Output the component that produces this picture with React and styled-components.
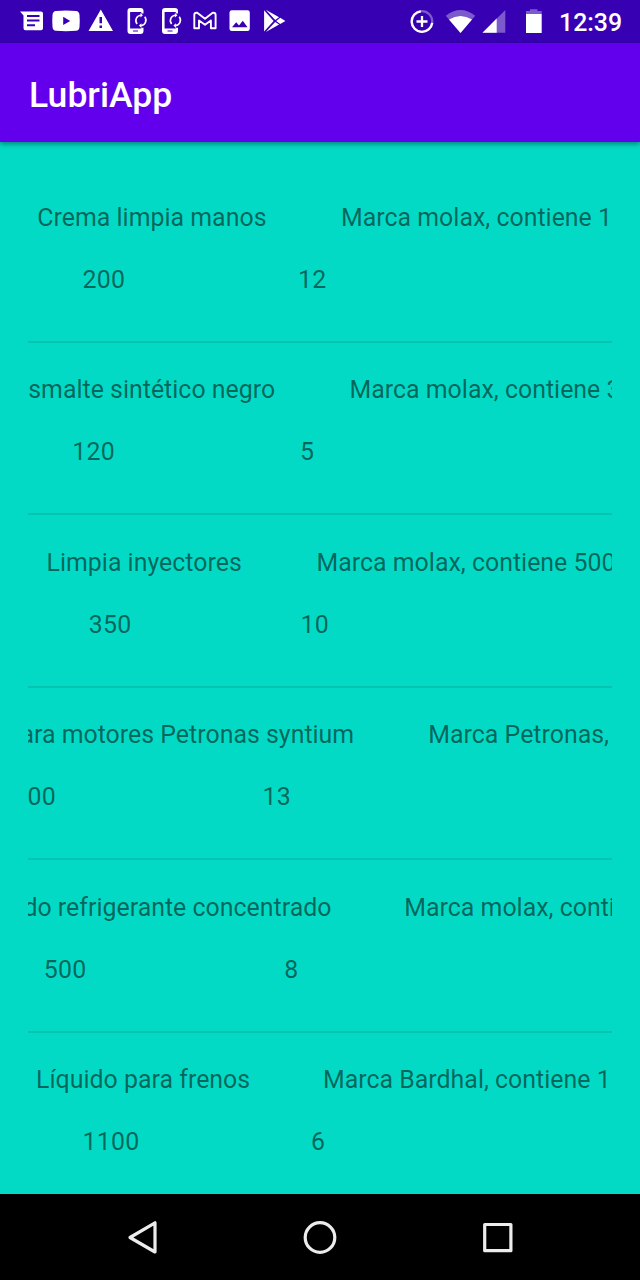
import React from "react";
import styled, { createGlobalStyle } from "styled-components";

const GlobalStyle = createGlobalStyle`
  * { box-sizing: border-box; }
  body { margin: 0; background: #03dac5; }
`;

const Screen = styled.div`
  width: 640px;
  height: 1280px;
  display: flex;
  flex-direction: column;
  overflow: hidden;
  background: #03dac5;
  font-family: Roboto, "Noto Sans", sans-serif;
`;

const StatusBar = styled.header`
  flex: 0 0 43px;
  height: 43px;
  display: flex;
  justify-content: space-between;
  background: #3700b3;
  color: #fff;
`;

const StatusIcons = styled.svg`
  display: block;
  width: ${(p) => p.$width}px;
  height: 43px;
`;

const StatusRight = styled.div`
  display: flex;
  align-items: center;
  padding-right: 18px;
`;

const Clock = styled.span`
  width: 63px;
  font-size: 24.89px;
  font-weight: 500;
  line-height: 40px;
  padding-top: 3px;
  white-space: nowrap;
`;

const AppBar = styled.div`
  flex: 0 0 99px;
  display: flex;
  align-items: center;
  padding: 5px 29px 0;
  background: #6200ee;
  box-shadow: 0 2px 5px rgba(0, 0, 0, 0.4);
  z-index: 1;
`;

const Title = styled.h1`
  margin: 0;
  color: #fff;
  font-size: 35.56px;
  font-weight: 500;
  line-height: 42px;
`;

const List = styled.main`
  flex: 1;
  min-height: 0;
  padding: 28px 28px 0;
  overflow: hidden;
`;

const Item = styled.section`
  height: 172.5px;
  padding-top: 32.6px;
  overflow: hidden;
  border-bottom: 2px solid ${(p) => (p.$last ? "transparent" : "#03c4b1")};
`;

const Line = styled.div`
  display: flex;
  height: 62.1px;
  margin-left: ${(p) => p.$start}px;
  color: rgba(0, 0, 0, 0.54);
  font-size: 24.89px;
  line-height: 30px;
  letter-spacing: ${(p) => (p.$numeric ? "0.3px" : "0.02px")};
  white-space: nowrap;
`;

const Cell = styled.span`
  flex: 0 0 ${(p) => (p.$width ? `${p.$width}px` : "auto")};
`;

const NavBar = styled.nav`
  flex: 0 0 86px;
  display: flex;
  align-items: center;
  justify-content: space-between;
  padding: 0 119px 0 119px;
  background: #000;
`;

const NavIcon = styled.svg`
  width: 48px;
  height: 48px;
  fill: none;
  stroke: #ececec;
  stroke-width: 3.2;
  stroke-linejoin: round;
`;

const items = [
  { name: "Crema limpia manos", detail: "Marca molax, contiene 1", price: "200", stock: "12", at: [9.3, 313, 54.5, 270] },
  { name: "smalte sintético negro", detail: "Marca molax, contiene 3", price: "120", stock: "5", at: [0.2, 321.5, 44.2, 272] },
  { name: "Limpia inyectores", detail: "Marca molax, contiene 500", price: "350", stock: "10", at: [18.5, 288.5, 60.8, 272.6] },
  { name: "ara motores Petronas syntium", detail: "Marca Petronas,", price: "00", stock: "13", at: [-7.6, 400.3, -0.6, 234.4] },
  { name: "do refrigerante concentrado", detail: "Marca molax, conti", price: "500", stock: "8", at: [-4.6, 376.3, 15.8, 256.2] },
  { name: "Líquido para frenos", detail: "Marca Bardhal, contiene 1", price: "1100", stock: "6", at: [8, 295, 54.4, 283] },
];

function Product({ item, last }) {
  const [nameX, detailX, priceX, stockX] = item.at;
  return (
    <Item $last={last}>
      <Line $start={nameX}>
        <Cell $width={detailX - nameX}>{item.name}</Cell>
        <Cell>{item.detail}</Cell>
      </Line>
      <Line $numeric $start={priceX}>
        <Cell $width={stockX - priceX}>{item.price}</Cell>
        <Cell>{item.stock}</Cell>
      </Line>
    </Item>
  );
}

function PhoneSync({ x }) {
  return (
    <g transform={`translate(${x} 8)`}>
      <path fill="#fff" fillRule="evenodd" d="M3 0H13Q16 0 16 3V5.5H13.8V4H2.6V20.5H13.8V19.8H16V23Q16 26 13 26H3Q0 26 0 23V3Q0 0 3 0ZM5.5 22.4V23.6H10.5V22.4Z" />
      <g fill="none" stroke="#fff" strokeWidth="1.6">
        <path d="M9.6 16A5.4 5.4 0 0 1 13.2 7.2" />
        <path d="M17.2 8.8A5.4 5.4 0 0 1 13.6 17.6" />
      </g>
      <path fill="#fff" d="M12.9 5 15.4 7.2 12.9 9.6ZM13.9 15.3 11.4 17.6 13.9 19.9Z" />
    </g>
  );
}

function Notifications() {
  return (
    <StatusIcons $width={300} viewBox="0 0 300 43">
      <path fill="#fff" fillRule="evenodd" d="M20 11.5H41Q43 11.5 43 13.5V28.3Q43 30.3 41 30.3H25.5Q23.5 30.3 23.5 28.3V15.5ZM27 15V17H39.5V15ZM27 19.6V21.6H39.5V19.6ZM27 24.2V26.2H35V24.2Z" />
      <path fill="#fff" fillRule="evenodd" d="M56 11Q66 10 76 11Q79.2 11.3 79.5 15Q80 21 79.5 27Q79.2 30.5 76 30.8Q66 31.6 56 30.8Q52.8 30.5 52.5 27Q52 21 52.5 15Q52.8 11.3 56 11ZM63.2 16.8V25L70.2 20.9Z" />
      <path fill="#fff" fillRule="evenodd" d="M100.8 9.5 113 31H88.5ZM99.5 17V23.3H102V17ZM99.5 25.5V28H102V25.5Z" />
      <PhoneSync x={127.5} />
      <PhoneSync x={162} />
      <path fill="none" stroke="#fff" strokeWidth="1.9" strokeLinejoin="round" d="M194.3 28.2V15Q194.3 12.8 196.5 12.8H197.2L205 18.8 212.7 12.8H213.4Q215.6 12.8 215.6 15V28.2H210.9V20.5L205 24.8 199 20.5V28.2Z" />
      <path fill="#fff" fillRule="evenodd" d="M232 10.2H247.5Q249.8 10.2 249.8 12.5V28.5Q249.8 31 247.5 31H232Q229.5 31 229.5 28.5V12.5Q229.5 10.2 232 10.2ZM232 27.3H247.5L242.8 20.8 239 25.4 236.2 22.3Z" />
      <path fill="#fff" d="M264.1 10.3 273.6 20.9 264.1 31.5ZM265.8 9.8 279.1 17.2 275.2 19.9ZM265.8 32 275.2 21.9 279.1 24.6ZM280.2 17.8 285.4 20.9 280.2 24 276.2 20.9Z" />
    </StatusIcons>
  );
}

function SystemIcons() {
  return (
    <StatusIcons $width={150} viewBox="409 0 150 43">
      <g fill="none" stroke="#fff" strokeWidth="2.3">
        <circle cx="422" cy="21.5" r="10.3" strokeOpacity="0.35" />
        <path d="M420.8 11.3A10.3 10.3 0 1 0 432.2 22.8M416.5 21.5H427.5M422 16V27" />
      </g>
      <path fill="#fff" fillOpacity="0.35" d="M445.8 15.8Q460.5 4.2 475.2 15.8L460.5 33Z" />
      <path fill="#fff" d="M449 19.5Q460.5 12.3 472 19.5L460.5 33Z" />
      <path fill="#fff" fillOpacity="0.35" d="M505.3 10V32.7H482.5Z" />
      <path fill="#fff" d="M496.7 18.6V32.7H482.5Z" />
      <path fill="#fff" fillOpacity="0.35" d="M526 11H530V9.2H537.5V11H541.7V14.2H526Z" />
      <path fill="#fff" d="M526 14H541.7V33H526Z" />
    </StatusIcons>
  );
}

export default function App() {
  return (
    <Screen>
      <GlobalStyle />
      <StatusBar>
        <Notifications />
        <StatusRight>
          <SystemIcons />
          <Clock>12:39</Clock>
        </StatusRight>
      </StatusBar>
      <AppBar>
        <Title>LubriApp</Title>
      </AppBar>
      <List>
        {items.map((item, i) => (
          <Product key={item.name} item={item} last={i === items.length - 1} />
        ))}
      </List>
      <NavBar>
        <NavIcon viewBox="119 1213 48 48"><path d="M155 1222.8V1252L130 1237.5Z" /></NavIcon>
        <NavIcon viewBox="296 1213 48 48"><circle cx="320" cy="1237.5" r="14.8" /></NavIcon>
        <NavIcon viewBox="473 1213 48 48"><rect x="484.7" y="1224.5" width="26.2" height="26.2" /></NavIcon>
      </NavBar>
    </Screen>
  );
}
